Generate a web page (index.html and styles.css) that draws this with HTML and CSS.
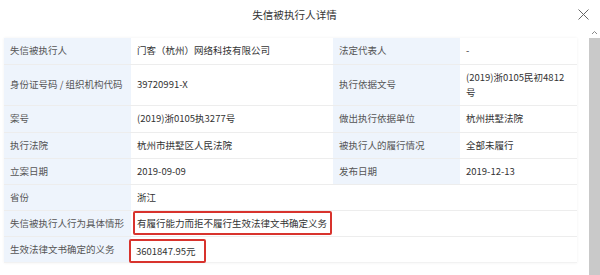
FILE: index.html
```html
<!DOCTYPE html>
<html lang="zh-CN">
<head>
<meta charset="utf-8">
<link rel="stylesheet" href="styles.css">
</head>
<body>
<div class="main">
  <div class="header">
    <span class="title">失信被执行人详情</span>
    <svg class="close" width="11" height="11" viewBox="0 0 11 11"><path d="M0.5 0.5L10.5 10.5M10.5 0.5L0.5 10.5" stroke="#666" stroke-width="1" fill="none"/></svg>
  </div>
  <table class="info">
    <colgroup><col class="c1"><col class="c2"><col class="c3"><col class="c4"></colgroup>
    <tr class="r26"><th>失信被执行人</th><td>门客（杭州）网络科技有限公司</td><th>法定代表人</th><td>-</td></tr>
    <tr class="r41"><th>身份证号码 / 组织机构代码</th><td>39720991-X</td><th>执行依据文号</th><td>(2019)浙0105民初4812号</td></tr>
    <tr class="r27"><th>案号</th><td>(2019)浙0105执3277号</td><th>做出执行依据单位</th><td>杭州拱墅法院</td></tr>
    <tr class="r26"><th>执行法院</th><td>杭州市拱墅区人民法院</td><th>被执行人的履行情况</th><td>全部未履行</td></tr>
    <tr class="r26"><th>立案日期</th><td>2019-09-09</td><th>发布日期</th><td>2019-12-13</td></tr>
    <tr class="r26"><th>省份</th><td colspan="3">浙江</td></tr>
    <tr class="r26"><th>失信被执行人行为具体情形</th><td colspan="3"><span class="mark mark1">有履行能力而拒不履行生效法律文书确定义务</span></td></tr>
    <tr class="r26"><th>生效法律文书确定的义务</th><td colspan="3"><span class="mark mark2">3601847.95元</span></td></tr>
  </table>
</div>
<div class="scroll">
  <div class="scroll-btn"><svg width="7" height="5" viewBox="0 0 7 5"><path d="M1 4L3.5 1.5L6 4" stroke="#888" stroke-width="1" fill="none"/></svg></div>
  <div class="scroll-thumb"></div>
</div>
</body>
</html>
```
FILE: styles.css
```css
html, body {
  margin: 0;
  padding: 0;
  background: #fff;
}
body {
  display: flex;
  width: 600px;
  height: 275px;
  overflow: hidden;
  font-family: "Noto Sans CJK SC", "Noto Sans", sans-serif;
}
.main {
  width: 589px;
  flex: none;
}
.header {
  position: relative;
  height: 28px;
  display: flex;
  align-items: center;
  justify-content: center;
}
.title {
  font-size: 10.6px;
  color: #333;
}
.close {
  position: absolute;
  right: 0;
  top: 9px;
}
.info {
  margin: 10px 0 0 4px;
  width: 573px;
  border-collapse: collapse;
  table-layout: fixed;
  font-size: 9.5px;
  box-shadow: 0 0 3px rgba(0, 0, 0, 0.06);
}
.c1 { width: 127px; }
.c2 { width: 202px; }
.c3 { width: 127px; }
.c4 { width: 117px; }
.info th,
.info td {
  padding: 0 6px;
  text-align: left;
  vertical-align: middle;
  border-bottom: 1px solid #ededed;
  line-height: 15px;
}
.info th {
  font-weight: normal;
  color: #555;
  background: #eef4fc;
}
.info td {
  color: #333;
  background: #fff;
}
.info tr:last-child th,
.info tr:last-child td {
  border-bottom: 1px solid #f2f2f2;
}
.r26 { height: 26px; }
.r27 { height: 27px; }
.r41 { height: 41px; }
.mark {
  display: inline-block;
  border: 2px solid #d8332d;
  border-radius: 2px;
  line-height: 20px;
}
.mark1 {
  margin-left: -4px;
  padding: 0 3px 0 2px;
}
.mark2 {
  margin-left: -8px;
  padding: 0 8px 0 5px;
  position: relative;
  top: 2px;
}
.scroll {
  width: 11px;
  flex: none;
  display: flex;
  flex-direction: column;
}
.scroll-btn {
  height: 38px;
  display: flex;
  justify-content: center;
  align-items: flex-end;
  padding-bottom: 2px;
  box-sizing: border-box;
}
.scroll-btn svg {
  margin-bottom: 1px;
}
.scroll-thumb {
  flex: 1;
  background: #c9c9c9;
}
```
